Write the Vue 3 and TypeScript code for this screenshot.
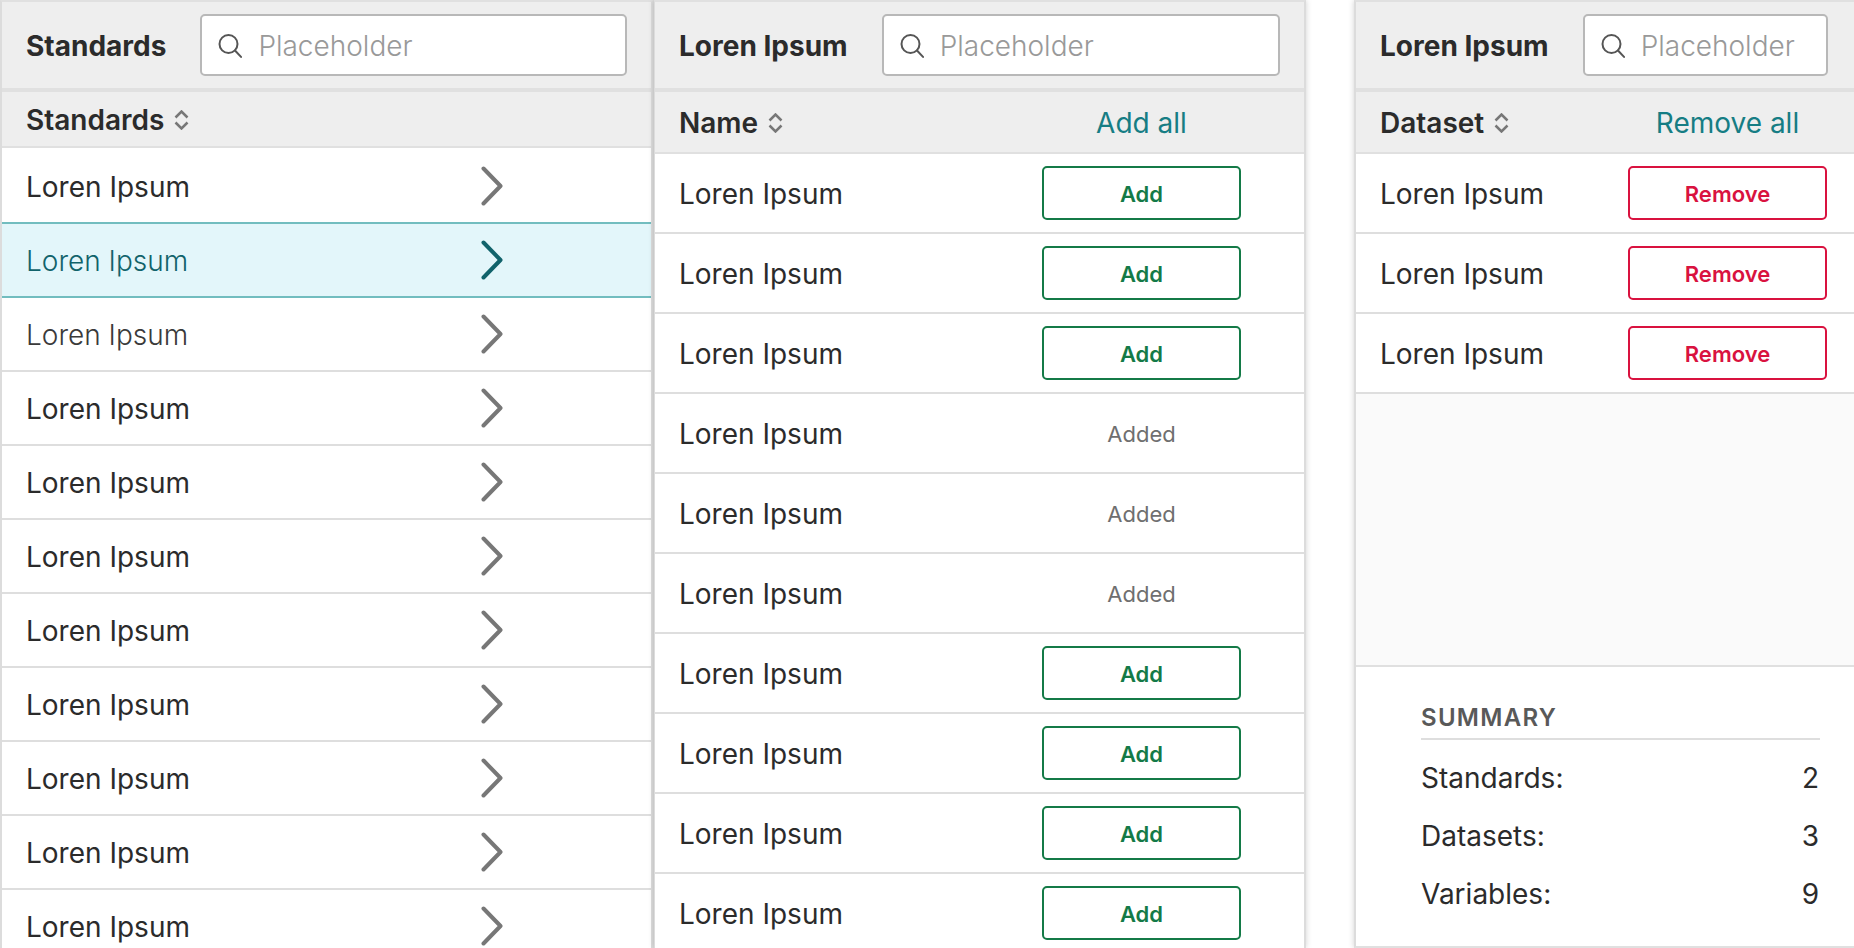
<script setup lang="ts">
interface NameRow { label: string; added: boolean }

const standards: string[] = Array.from({ length: 11 }, () => 'Loren Ipsum')
const names: NameRow[] = [false, false, false, true, true, true, false, false, false, false].map((added) => ({
  label: 'Loren Ipsum',
  added,
}))
const datasets: string[] = ['Loren Ipsum', 'Loren Ipsum', 'Loren Ipsum']
const summary = [
  { label: 'Standards:', value: 2 },
  { label: 'Datasets:', value: 3 },
  { label: 'Variables:', value: 9 },
]
</script>

<template>
  <div class="page">
    <section class="panel first">
      <header class="top">
        <h2 class="title">Standards</h2>
        <label class="search">
          <svg class="search-icon" viewBox="0 0 24 24" fill="none"><circle cx="10.5" cy="10.5" r="9" /><path d="M17 17l6 6.4" /></svg>
          <input placeholder="Placeholder" />
        </label>
      </header>
      <div class="columns short">
        <span class="sort-label">Standards</span>
        <svg class="sort" viewBox="0 0 15 20" fill="none"><path d="M1.5 7.5L7.5 1.5L13.5 7.5M1.5 12.5L7.5 18.5L13.5 12.5" /></svg>
      </div>
      <div
        v-for="(item, i) in standards"
        :key="i"
        class="std-row"
        :class="{ selected: i === 1, dim: i === 2 }"
      >
        <span class="std-label">{{ item }}</span>
        <svg class="chevron" viewBox="0 0 22 40" fill="none"><path d="M2.5 2.5L19.5 20L2.5 37.5" /></svg>
      </div>
    </section>

    <section class="panel second">
      <header class="top">
        <h2 class="title">Loren Ipsum</h2>
        <label class="search">
          <svg class="search-icon" viewBox="0 0 24 24" fill="none"><circle cx="10.5" cy="10.5" r="9" /><path d="M17 17l6 6.4" /></svg>
          <input placeholder="Placeholder" />
        </label>
      </header>
      <div class="columns">
        <span class="sort-label">Name</span>
        <svg class="sort" viewBox="0 0 15 20" fill="none"><path d="M1.5 7.5L7.5 1.5L13.5 7.5M1.5 12.5L7.5 18.5L13.5 12.5" /></svg>
        <a class="bulk">Add all</a>
      </div>
      <div v-for="(row, i) in names" :key="i" class="row">
        <span class="row-label">{{ row.label }}</span>
        <span v-if="row.added" class="added">Added</span>
        <button v-else class="btn add">Add</button>
      </div>
    </section>

    <section class="panel third">
      <header class="top">
        <h2 class="title">Loren Ipsum</h2>
        <label class="search">
          <svg class="search-icon" viewBox="0 0 24 24" fill="none"><circle cx="10.5" cy="10.5" r="9" /><path d="M17 17l6 6.4" /></svg>
          <input placeholder="Placeholder" />
        </label>
      </header>
      <div class="columns">
        <span class="sort-label">Dataset</span>
        <svg class="sort" viewBox="0 0 15 20" fill="none"><path d="M1.5 7.5L7.5 1.5L13.5 7.5M1.5 12.5L7.5 18.5L13.5 12.5" /></svg>
        <a class="bulk">Remove all</a>
      </div>
      <div v-for="(item, i) in datasets" :key="i" class="row">
        <span class="row-label">{{ item }}</span>
        <button class="btn remove">Remove</button>
      </div>
      <div class="filler"></div>
      <div class="summary">
        <h3 class="summary-title">SUMMARY</h3>
        <div v-for="s in summary" :key="s.label" class="summary-row">
          <span>{{ s.label }}</span>
          <span>{{ s.value }}</span>
        </div>
      </div>
    </section>
  </div>
</template>

<style>
html,
body {
  margin: 0;
  overflow: hidden;
  background: #fff;
}
</style>

<style scoped>
.page {
  display: flex;
  width: 1854px;
  height: 948px;
  overflow: hidden;
  background: #fff;
  font-family: Inter, "Liberation Sans", sans-serif;
  color: #2b2b2b;
}
.panel {
  display: flex;
  flex-direction: column;
  box-sizing: border-box;
  height: 948px;
  flex: none;
  overflow: hidden;
  background: #fff;
  border-top: 2px solid #e0e0e0;
  border-left: 2px solid #dcdcdc;
  border-right: 2px solid #dcdcdc;
  box-shadow: 0 0 6px rgba(0, 0, 0, 0.18);
  position: relative;
}
.first {
  width: 654px;
  border-right-width: 3px;
}
.second {
  width: 652px;
  border-left-width: 1px;
}
.third {
  width: 500px;
  margin-left: 48px;
  border-right: none;
  border-bottom: 2px solid #e0e0e0;
}
.top {
  display: flex;
  align-items: center;
  flex: none;
  box-sizing: border-box;
  height: 90px;
  padding: 0 24px 0 24px;
  gap: 34px;
  background: #eee;
  border-bottom: 4px solid #e0e0e0;
}
.third .top {
  padding-right: 26px;
  padding-left: 24px;
}
.title {
  margin: 2px 0 0;
  flex: none;
  font-size: 28px;
  font-weight: 700;
}
.search {
  display: flex;
  align-items: center;
  flex: 1;
  min-width: 0;
  box-sizing: border-box;
  height: 62px;
  margin-top: 0;
  padding: 0 16px;
  gap: 16px;
  background: #fff;
  border: 2px solid #b8b8b8;
  border-radius: 5px;
}
.search-icon {
  flex: none;
  width: 24px;
  height: 25px;
  stroke: #555;
  stroke-width: 2;
  stroke-linecap: round;
}
.search input {
  flex: 1;
  min-width: 0;
  margin-top: 1px;
  border: none;
  outline: none;
  padding: 0;
  background: transparent;
  font-family: Inter, "Liberation Sans", sans-serif;
  font-size: 28px;
  font-weight: 300;
  color: #999;
}
.search input::placeholder {
  color: #999;
  opacity: 1;
}
.columns {
  display: flex;
  align-items: center;
  flex: none;
  box-sizing: border-box;
  height: 62px;
  padding: 2px 63px 0 24px;
  background: #eee;
  border-bottom: 2px solid #e0e0e0;
}
.columns.short {
  height: 56px;
  margin-bottom: 2px;
  padding: 1px 0 0 24px;
}
.third .columns {
  padding-left: 24px;
  padding-right: 27px;
}
.sort-label {
  font-size: 28px;
  font-weight: 600;
}
.sort {
  flex: none;
  width: 15px;
  height: 20px;
  margin-left: 10px;
  stroke: #777;
  stroke-width: 2.5;
}
.bulk {
  width: 199px;
  margin-left: auto;
  text-align: center;
  font-size: 28px;
  color: #167d84;
}
.std-row {
  display: flex;
  align-items: center;
  flex: none;
  box-sizing: border-box;
  height: 74px;
  padding-left: 24px;
  border-bottom: 2px solid #dedede;
}
.std-label {
  flex: 1;
  font-size: 28px;
  margin-top: 2px;
}
.chevron {
  flex: none;
  width: 22px;
  height: 40px;
  margin-right: 148px;
  stroke: #777;
  stroke-width: 4;
  stroke-linecap: round;
  stroke-linejoin: round;
}
.std-row.dim .std-label {
  color: #3a3a3a;
  font-weight: 300;
}
.std-row.selected {
  background: #e3f6fa;
  border-bottom-color: #72bdbf;
  box-shadow: 0 -2px 0 #72bdbf;
  position: relative;
}
.std-row.selected .std-label {
  color: #11636b;
  font-weight: 300;
}
.std-row.selected .chevron {
  stroke: #11636b;
}
.row {
  display: flex;
  align-items: center;
  justify-content: space-between;
  flex: none;
  box-sizing: border-box;
  height: 80px;
  padding: 0 63px 0 24px;
  border-bottom: 2px solid #dedede;
}
.third .row {
  padding-left: 24px;
  padding-right: 27px;
}
.row-label {
  font-size: 28px;
  margin-top: 1px;
}
.btn {
  box-sizing: border-box;
  width: 199px;
  height: 54px;
  padding: 2px 0 0;
  background: #fff;
  border: 2px solid;
  border-radius: 5px;
  font-family: Inter, "Liberation Sans", sans-serif;
  font-size: 22px;
  font-weight: 600;
}
.add {
  color: #147a47;
  border-color: #147a47;
}
.remove {
  color: #d9123f;
  border-color: #d9123f;
}
.added {
  width: 199px;
  margin-top: 2px;
  text-align: center;
  font-size: 22px;
  color: #6f6f6f;
}
.filler {
  flex: 1;
  background: #fafafa;
  border-bottom: 2px solid #e0e0e0;
}
.summary {
  flex: none;
  box-sizing: border-box;
  height: 279px;
  padding: 36px 34px 0 65px;
}
.summary-title {
  margin: 0 0 9px;
  padding-bottom: 6px;
  font-size: 24px;
  font-weight: 600;
  letter-spacing: 1.3px;
  color: #595959;
  border-bottom: 2px solid #dedede;
}
.summary-row {
  display: flex;
  justify-content: space-between;
  align-items: center;
  height: 58px;
  font-size: 28px;
  font-weight: 400;
  padding-right: 1px;
}
</style>
